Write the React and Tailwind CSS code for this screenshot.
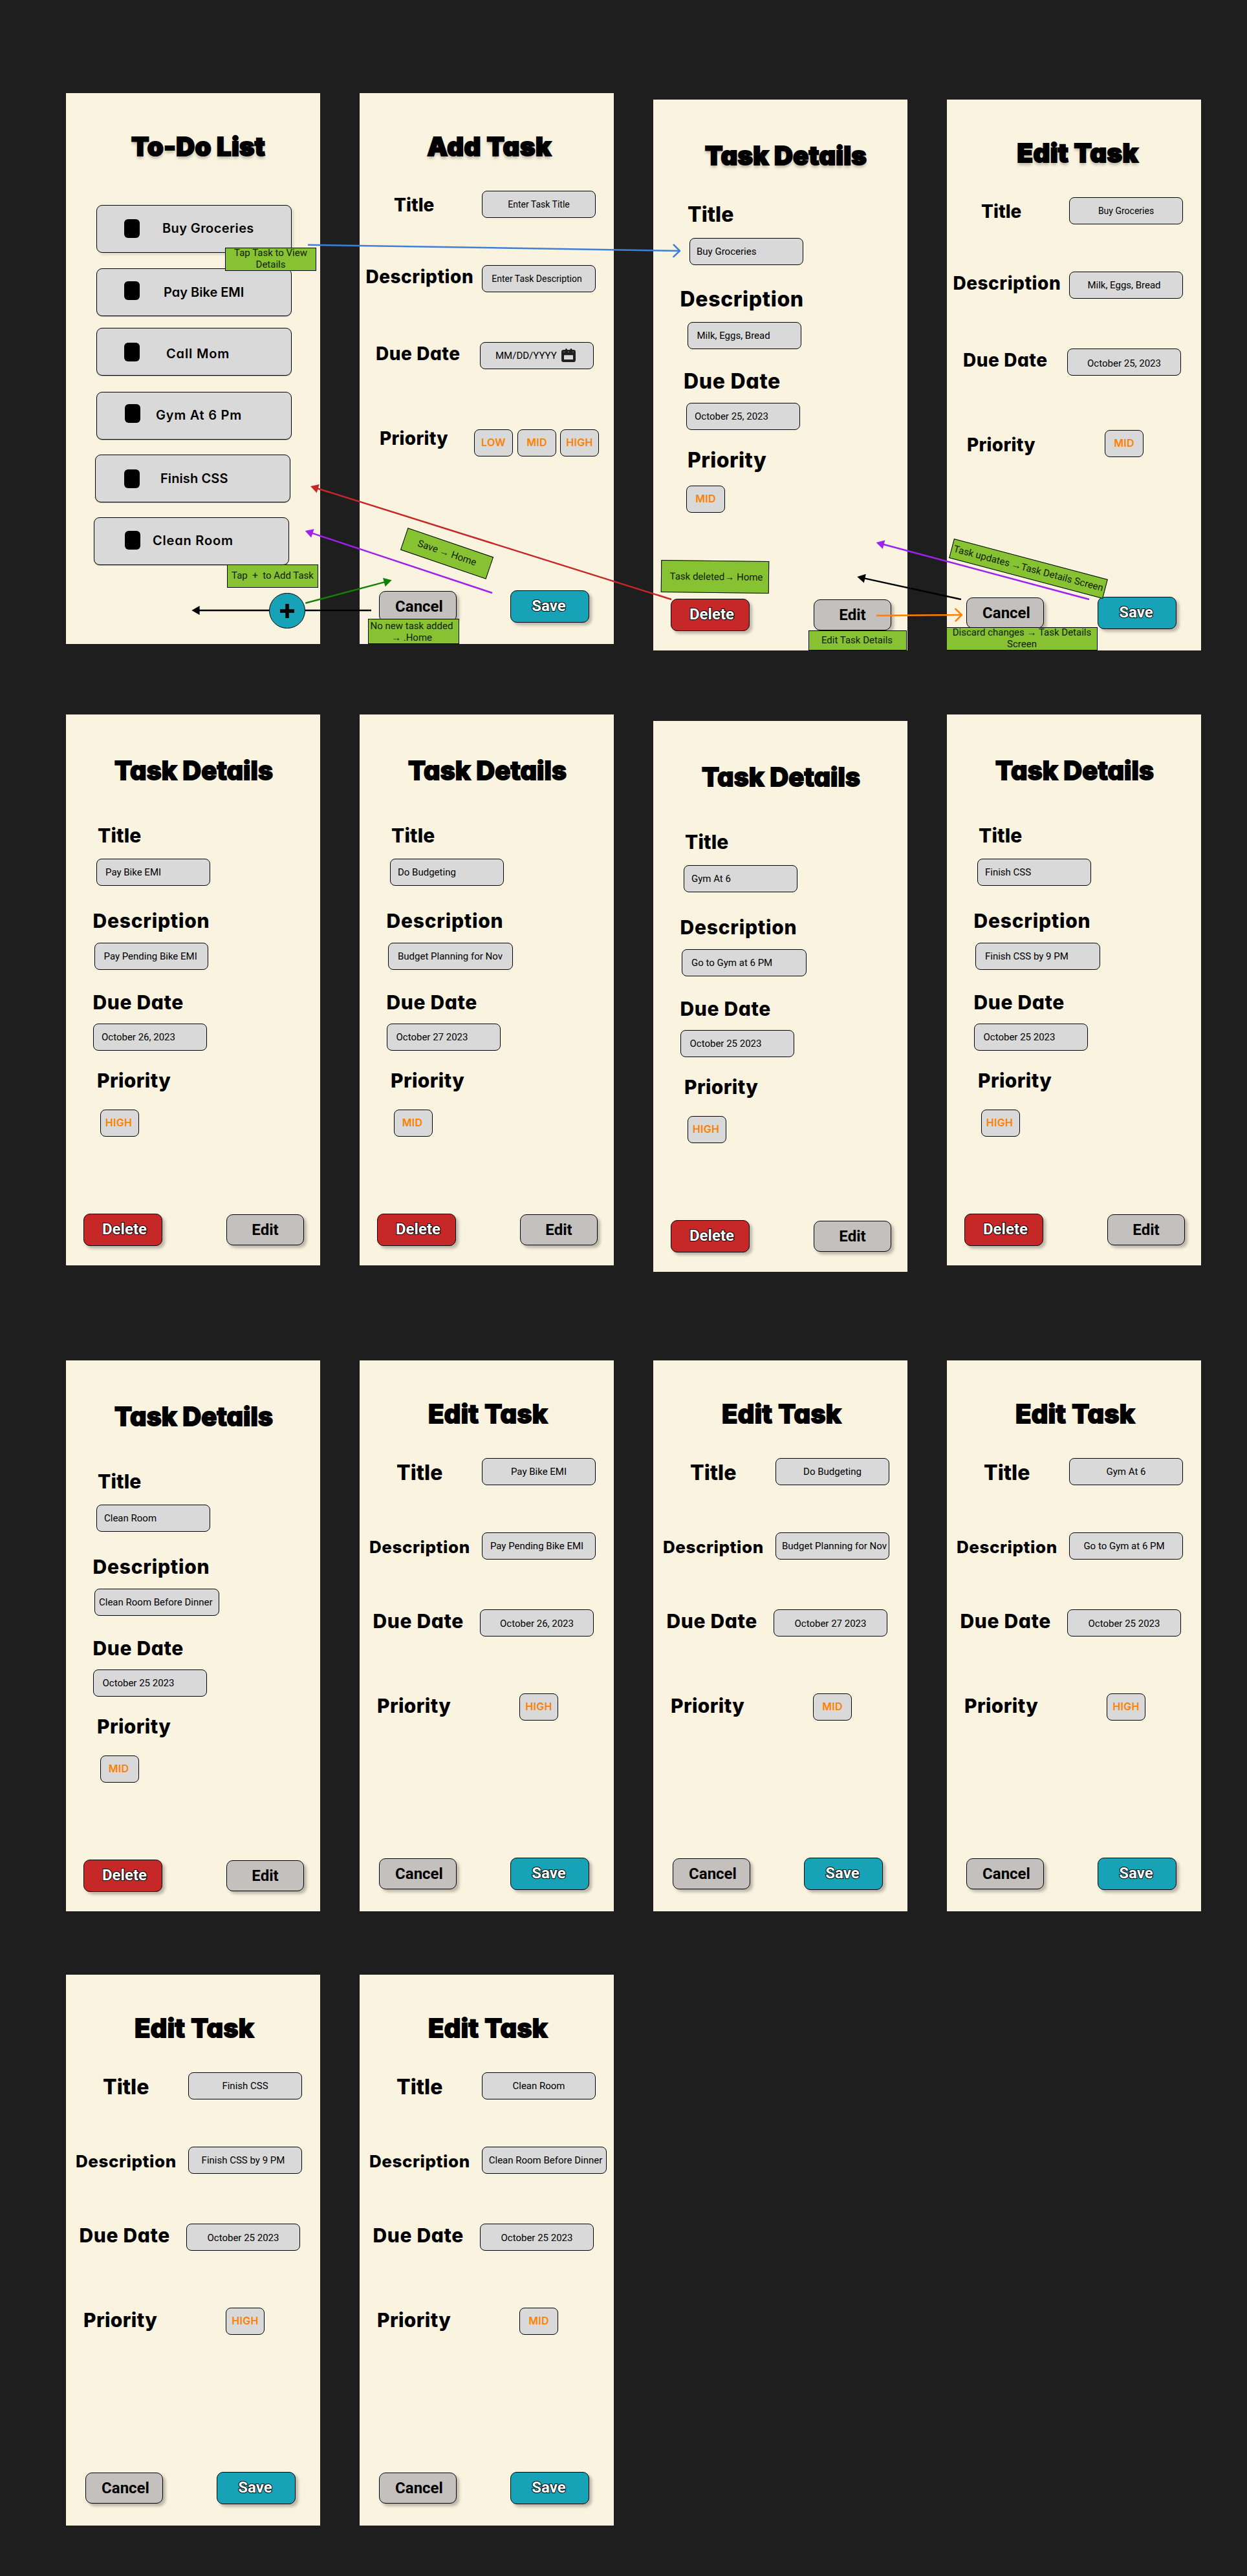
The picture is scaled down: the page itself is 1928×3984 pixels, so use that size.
const GREY_BOX = "shrink-0 border border-black bg-[#d9d9d9]";
const DISPLAY = "font-[Inter,sans-serif] [font-feature-settings:'cv11'] whitespace-nowrap text-black";

function Screen({ className = "", children }) {
  return (
    <section className={`flex h-[852px] w-[393px] shrink-0 flex-col items-start bg-[#faf3e0] ${className}`}>
      {children}
    </section>
  );
}

function Heading({ strong, className = "", children }) {
  const look = strong
    ? "font-black [text-shadow:0_4px_4px_rgba(0,0,0,0.25)]"
    : "font-extrabold";
  return (
    <h1
      className={`${DISPLAY} h-12 text-[40px] leading-[48px] [-webkit-text-stroke:2px_black] [paint-order:stroke_fill] ${look} ${className}`}
    >
      {children}
    </h1>
  );
}

function Label({ className = "", children }) {
  return <h2 className={`${DISPLAY} h-10 shrink-0 font-extrabold leading-10 ${className}`}>{children}</h2>;
}

function Box({ className = "", children }) {
  return (
    <div
      className={`${GREY_BOX} flex h-[42px] items-start whitespace-nowrap rounded-lg font-[Roboto,sans-serif] leading-10 text-black ${className}`}
    >
      {children}
    </div>
  );
}

function Chip({ className = "", children }) {
  return (
    <div
      className={`${GREY_BOX} flex h-[42px] w-[60px] justify-center rounded-lg font-[Inter,sans-serif] text-base font-semibold leading-[39px] tracking-[0.3px] text-[#ff7f00] ${className}`}
    >
      {children}
    </div>
  );
}

function Button({ className = "", children }) {
  return (
    <button
      type="button"
      className={`flex shrink-0 justify-center rounded-[10px] border border-black font-[Roboto,sans-serif] text-2xl font-bold leading-[46px] shadow-[4px_4px_4px_rgba(0,0,0,0.25)] ${className}`}
    >
      {children}
    </button>
  );
}

const OUTLINED = "text-white [-webkit-text-stroke:2px_black] [paint-order:stroke_fill]";

function DetailActions({ className = "" }) {
  return (
    <div className={`ml-[27px] flex items-start gap-[99px] ${className}`}>
      <Button className={`h-[50px] w-[122px] bg-[#c62828] pl-[5px] ${OUTLINED}`}>Delete</Button>
      <Button className="mt-px h-12 w-[120px] bg-[#c4c0bd] text-black">Edit</Button>
    </div>
  );
}

function FormActions() {
  return (
    <div className="ml-[30px] mt-[212px] flex items-start gap-[83px]">
      <Button className="mt-px h-12 w-[120px] bg-[#c4c0bd] pl-1 text-black">Cancel</Button>
      <Button className={`h-[50px] w-[122px] bg-[#17a2b8] pr-[3px] ${OUTLINED}`}>Save</Button>
    </div>
  );
}

/* ---------- To-Do list ---------- */

const TASKS = [
  { name: "Buy Groceries", card: "ml-[47px] mt-[66px] shadow-[3px_3px_4px_rgba(0,0,0,0.12)]", box: "ml-[42px] mt-[21px]", text: "ml-[35px] mt-5 tracking-[0.4px]" },
  { name: "Pay Bike EMI", card: "ml-[47px] mt-6", box: "ml-[42px] mt-[19px]", text: "ml-[37px] mt-[21px]" },
  { name: "Call Mom", card: "ml-[47px] mt-[18px]", box: "ml-[42px] mt-[22px]", text: "ml-[41px] mt-6 tracking-[0.85px]" },
  { name: "Gym At 6 Pm", card: "ml-[47px] mt-[25px]", box: "ml-[43px] mt-[18px]", text: "ml-[24px] mt-5 tracking-[0.75px]" },
  { name: "Finish CSS", card: "ml-[45px] mt-[23px]", box: "ml-[44px] mt-[22px]", text: "ml-[32px] mt-[21px] tracking-[0.1px]" },
  { name: "Clean Room", card: "ml-[43px] mt-[23px]", box: "ml-[47px] mt-5", text: "ml-[19px] mt-5 tracking-[0.8px]" },
];

function TodoScreen() {
  return (
    <Screen>
      <Heading strong className="ml-[101px] mt-[59px] tracking-[0.3px]">To-Do List</Heading>
      {TASKS.map((t) => (
        <div key={t.name} className={`${GREY_BOX} flex h-[74px] w-[302px] items-start rounded-[9px] shadow-[0_1px_1px_rgba(0,0,0,0.25)] ${t.card}`}>
          <span className={`h-[29px] w-6 shrink-0 rounded-[6px] bg-black ${t.box}`} />
          <span className={`${DISPLAY} text-xl font-semibold leading-[30px] ${t.text}`}>{t.name}</span>
        </div>
      ))}
      <button
        type="button"
        className="relative z-10 ml-[314px] mt-[43px] flex h-[55px] w-14 shrink-0 items-center justify-center rounded-full border border-black bg-[#17a2b8]"
      >
        <svg className="size-[22px]" viewBox="0 0 22 22">
          <path d="M11 0v22M0 11h22" stroke="black" strokeWidth="5.5" />
        </svg>
      </button>
    </Screen>
  );
}

/* ---------- Add / Edit task ---------- */

function CalendarIcon() {
  return (
    <svg className="ml-[7px] mt-[9px] h-[21px] w-[22px] shrink-0" viewBox="0 0 22 21" fill="none">
      <rect x="0" y="2" width="22" height="19" rx="3.2" fill="#202020" />
      <rect x="6" y="0" width="3" height="6" rx="1.5" fill="#202020" />
      <rect x="13.5" y="0" width="3" height="6" rx="1.5" fill="#202020" />
      <path d="M3.6 5.2h1.2M10.4 5.2h1.4M17.4 5.2h1.2" stroke="#8d8d8d" strokeWidth="1.6" />
      <rect x="4" y="10.3" width="14" height="6.7" rx="0.6" fill="#d9d9d9" />
    </svg>
  );
}

const FORM_LABELS = {
  small: {
    title: "ml-[53px] w-[136px] mt-[2px] text-[28px]",
    desc: "ml-[9.5px] w-[179.5px] mt-0 text-[28px] tracking-[0.5px]",
    due: "ml-[25px] w-[161px] mt-0 text-[28px] tracking-[0.55px]",
    prio: "ml-[31px] mt-[3px] text-[28px] tracking-[0.25px]",
  },
  large: {
    title: "ml-[57px] w-[132px] mt-[2.5px] text-[32px]",
    desc: "ml-[15px] w-[174px] mt-[5px] text-[26px] tracking-[0.55px]",
    due: "ml-[20.5px] w-[165.5px] mt-0 text-[30px] tracking-[0.65px]",
    prio: "ml-[27px] mt-[3px] text-[30px] tracking-[0.35px]",
  },
};

function FormScreen({ heading, labels, title, desc, due, priority, className }) {
  return (
    <Screen className={className}>
      {heading}
      <div className="mt-11 flex h-[46px] items-start">
        <Label className={labels.title}>Title</Label>
        {title}
      </div>
      <div className="mt-[67px] flex h-[46px] items-start">
        <Label className={labels.desc}>Description</Label>
        {desc}
      </div>
      <div className="mt-[73px] flex h-[46px] items-start">
        <Label className={labels.due}>Due Date</Label>
        {due}
      </div>
      <div className="mt-[82px] flex h-[46px] w-full items-start">
        <Label className={labels.prio}>Priority</Label>
        {priority}
      </div>
      <FormActions />
    </Screen>
  );
}

function AddScreen() {
  return (
    <FormScreen
      heading={<Heading strong className="ml-[104.5px] mt-[59px] tracking-[0.6px]">Add Task</Heading>}
      labels={FORM_LABELS.small}
      title={<Box className="w-[176px] justify-center text-sm leading-10">Enter Task Title</Box>}
      desc={<Box className="mt-[2px] w-[176px] justify-center pr-[6px] text-sm leading-10">Enter Task Description</Box>}
      due={
        <Box className="mt-[2px] w-[176px] pl-[23px] text-[15px]">
          <span>MM/DD/YYYY</span>
          <CalendarIcon />
        </Box>
      }
      priority={
        <div className="ml-auto mr-[23px] mt-[9px] flex gap-1.5">
          <Chip className="mr-px">LOW</Chip>
          <Chip>MID</Chip>
          <Chip>HIGH</Chip>
        </div>
      }
    />
  );
}

function EditScreen({ first, title, desc, descBox = "w-[176px] pr-[6px]", due, priority, className }) {
  return (
    <FormScreen
      className={className}
      labels={first ? FORM_LABELS.small : FORM_LABELS.large}
      heading={
        <Heading strong={first} className={first ? "ml-[108.5px] mt-[59px] tracking-[0.4px]" : "ml-[106px] mt-[59px] tracking-[0.4px]"}>
          Edit Task
        </Heading>
      }
      title={<Box className={first ? "w-[176px] justify-center text-sm leading-10" : "w-[176px] justify-center text-[15px]"}>{title}</Box>}
      desc={<Box className={`mt-[2px] justify-center text-[15px] ${descBox}`}>{desc}</Box>}
      due={<Box className={`mt-[2px] w-[176px] justify-center text-[15px] ${first ? "pt-[2px]" : "pt-px"}`}>{due}</Box>}
      priority={<Chip className={first ? "ml-auto mr-[89px]" : "ml-auto mr-[86px] mt-1"}>{priority}</Chip>}
    />
  );
}

/* ---------- Task details ---------- */

const FIRST_DETAILS = {
  heading: "ml-[80px] mt-[63px] tracking-[0.2px]",
  label: "text-[32px]",
  title: "ml-[53px] mt-[47px]",
  titleBox: "ml-[56px] mt-4",
  desc: "ml-[41.5px] mt-[33px] tracking-[0.65px]",
  descBox: "ml-[53px] mt-[15px]",
  due: "ml-[47px] mt-[30px] tracking-[0.7px]",
  dueBox: "ml-[51px] mt-[13px]",
  prio: "ml-[53px] mt-[27px] tracking-[0.45px]",
  chip: "ml-[51px] mt-[19px]",
  actions: "mt-[133px]",
};

const DETAILS = {
  heading: "ml-[75px] mt-[63px] tracking-[0.1px]",
  label: "text-[30px]",
  title: "ml-[49px] mt-14 tracking-[0.1px]",
  titleBox: "ml-[47px] mt-4",
  desc: "ml-[41.5px] mt-[34px] tracking-[0.75px]",
  descBox: "ml-[44px] mt-[14px]",
  due: "ml-[41.5px] mt-[30px] tracking-[0.65px]",
  dueBox: "ml-[42px] mt-[13px]",
  prio: "ml-[48px] mt-[26px] tracking-[0.35px]",
  chip: "ml-[53px] mt-[25px] pr-[3px]",
  actions: "mt-[119px]",
};

function DetailsScreen({ first, title, desc, due, priority, titlePad = "pl-[11px]", descPad = "w-[176px] pl-[13.5px]", duePad = "pl-[13.5px]", className }) {
  const s = first ? FIRST_DETAILS : DETAILS;
  return (
    <Screen className={className}>
      <Heading strong={first} className={s.heading}>Task Details</Heading>
      <Label className={`${s.label} ${s.title}`}>Title</Label>
      <Box className={`w-[176px] text-[15px] ${titlePad} ${s.titleBox}`}>{title}</Box>
      <Label className={`${s.label} ${s.desc}`}>Description</Label>
      <Box className={`text-[15px] ${descPad} ${s.descBox}`}>{desc}</Box>
      <Label className={`${s.label} ${s.due}`}>Due Date</Label>
      <Box className={`w-[176px] text-[15px] ${duePad} ${s.dueBox}`}>{due}</Box>
      <Label className={`${s.label} ${s.prio}`}>Priority</Label>
      <Chip className={s.chip}>{priority}</Chip>
      <DetailActions className={s.actions} />
    </Screen>
  );
}

/* ---------- Flow arrows and notes laid over the first row ---------- */

function Arrow({ from, to, color, open }) {
  const [x1, y1] = from;
  const [x2, y2] = to;
  const angle = (Math.atan2(y2 - y1, x2 - x1) * 180) / Math.PI;
  const length = Math.hypot(x2 - x1, y2 - y1);
  return (
    <g transform={`translate(${x1} ${y1}) rotate(${angle})`} stroke={color} strokeWidth="2.5" fill="none">
      <path d={`M0 0H${open ? length : length - 10}`} />
      {open ? (
        <path d={`M${length - 9.5} -9.2L${length} 0L${length - 9.5} 9.2`} strokeLinecap="round" strokeLinejoin="round" />
      ) : (
        <path d={`M${length} 0L${length - 12.3} -7V7Z`} fill={color} stroke="none" />
      )}
    </g>
  );
}

function Arrows() {
  return (
    <svg className="pointer-events-none absolute left-0 top-0 h-[1100px] w-[1928px]" viewBox="0 0 1928 1100">
      <Arrow from={[574, 944]} to={[296.3, 944]} color="#000000" />
      <Arrow from={[472.3, 932.7]} to={[605.7, 897.3]} color="#118207" />
      <Arrow from={[761, 917]} to={[471.7, 821]} color="#a020f0" />
      <Arrow from={[1038, 927]} to={[480, 752]} color="#c62828" />
      <Arrow from={[476, 378.7]} to={[1051, 388]} color="#3f7fd6" open />
      <Arrow from={[1684, 927]} to={[1354.7, 839]} color="#a020f0" />
      <Arrow from={[1486, 927]} to={[1325.3, 892]} color="#000000" />
      <Arrow from={[1355, 952]} to={[1487, 951]} color="#ff7f00" open />
    </svg>
  );
}

function Note({ className = "", children }) {
  return (
    <div
      className={`absolute flex items-center justify-center whitespace-pre border border-black bg-[#86c232] text-center font-[Roboto,sans-serif] text-[15px] leading-[17.6px] text-[#12200a] ${className}`}
    >
      {children}
    </div>
  );
}

function Notes() {
  return (
    <>
      <Note className="left-[348px] top-[383px] h-9 w-[141px]">{"Tap Task to View\nDetails"}</Note>
      <Note className="left-[351px] top-[873px] h-9 w-[141px]">{"Tap  +  to Add Task"}</Note>
      <Note className="left-[620.5px] top-[837.5px] h-9 w-[140px] rotate-[18.85deg]">Save → Home</Note>
      <Note className="left-[569px] top-[957px] h-[39px] w-[141px] pr-[6px] pt-[2px]">{"No new task added\n→ .Home"}</Note>
      <Note className="left-[1021.5px] top-[866.5px] h-[50px] w-[167px] rotate-[0.7deg] pl-1 pt-[2px] text-base">Task deleted→ Home</Note>
      <Note className="left-[1250px] top-[975px] h-[31px] w-[152px] pr-[2px]">Edit Task Details</Note>
      <Note className="left-[1467px] top-[864px] h-[31px] w-[246px] rotate-[14.8deg]">Task updates →Task Details Screen</Note>
      <Note className="left-[1464px] top-[970px] h-9 w-[233px] border-l-0">{"Discard changes → Task Details\nScreen"}</Note>
    </>
  );
}

export default function App() {
  return (
    <main className="relative flex h-[3984px] w-[1928px] flex-col bg-[#1e1e1e] pl-[102px] pt-36">
      <div className="flex items-start gap-[61px]">
        <TodoScreen />
        <AddScreen />
        <DetailsScreen first className="mt-2.5" title="Buy Groceries" desc="Milk, Eggs, Bread" due="October 25, 2023" priority="MID" titlePad="pl-[10px]" duePad="pl-[12px]" />
        <EditScreen first className="mt-2.5" title="Buy Groceries" desc="Milk, Eggs, Bread" due="October 25, 2023" priority="MID" />
      </div>
      <div className="mt-[99px] flex items-start gap-[61px]">
        <DetailsScreen title="Pay Bike EMI" desc="Pay Pending Bike EMI" due="October 26, 2023" priority="HIGH" titlePad="pl-[13px]" duePad="pl-[12px]" />
        <DetailsScreen title="Do Budgeting" desc="Budget Planning for Nov" due="October 27 2023" priority="MID" descPad="w-[193px] pl-[14px]" />
        <DetailsScreen className="mt-2.5" title="Gym At 6" desc="Go to Gym at 6 PM" due="October 25 2023" priority="HIGH" descPad="w-[193px] pl-[14px]" />
        <DetailsScreen title="Finish CSS" desc="Finish CSS by 9 PM" due="October 25 2023" priority="HIGH" descPad="w-[193px] pl-[14px]" />
      </div>
      <div className="mt-[137px] flex items-start gap-[61px]">
        <DetailsScreen title="Clean Room" desc="Clean Room Before Dinner" due="October 25 2023" priority="MID" descPad="w-[193px] pl-[6px]" />
        <EditScreen title="Pay Bike EMI" desc="Pay Pending Bike EMI" due="October 26, 2023" priority="HIGH" />
        <EditScreen title="Do Budgeting" desc="Budget Planning for Nov" due="October 27 2023" priority="MID" descBox="w-[176px] pl-[6px]" />
        <EditScreen title="Gym At 6" desc="Go to Gym at 6 PM" due="October 25 2023" priority="HIGH" />
      </div>
      <div className="mt-[98px] flex items-start gap-[61px]">
        <EditScreen title="Finish CSS" desc="Finish CSS by 9 PM" due="October 25 2023" priority="HIGH" />
        <EditScreen title="Clean Room" desc="Clean Room Before Dinner" due="October 25 2023" priority="MID" descBox="w-[193px] pl-[4px]" />
      </div>
      <Arrows />
      <Notes />
    </main>
  );
}
